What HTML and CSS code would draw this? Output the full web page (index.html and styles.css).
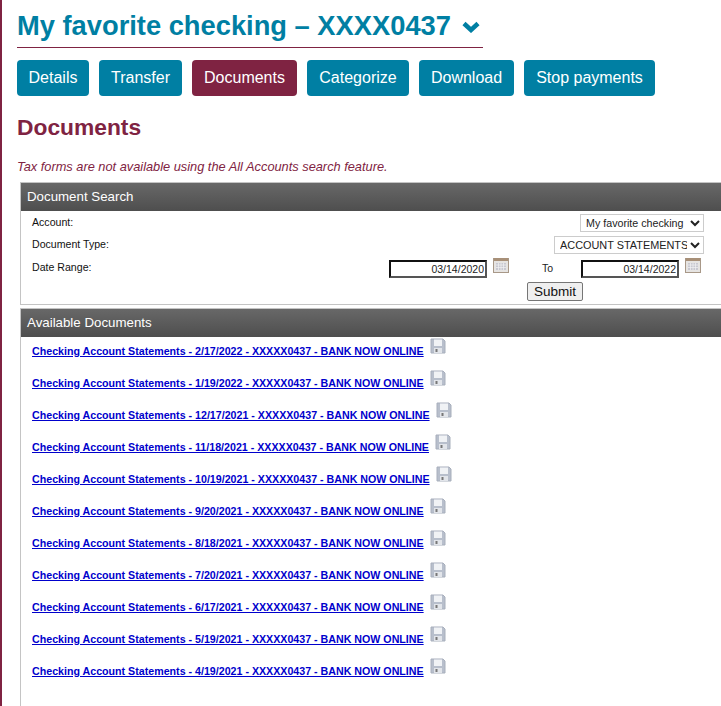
FILE: index.html
```html
<!DOCTYPE html>
<html lang="en">
<head>
<meta charset="utf-8">
<title>Documents</title>
<link rel="stylesheet" href="styles.css">
</head>
<body>
<svg class="defs" width="0" height="0" aria-hidden="true">
  <symbol id="disk" viewBox="0 0 16 16">
    <path d="M1 1h12l2 2v12H1z" fill="#b8bfcc" stroke="#a8afbc" stroke-width="1"/>
    <rect x="4" y="1.500" width="8" height="6.500" fill="#f0f2f5"/>
    <rect x="4" y="10" width="8" height="5" fill="#e2e5ea"/>
    <rect x="5.500" y="11" width="2" height="3" fill="#777"/>
  </symbol>
  <symbol id="cal" viewBox="0 0 16 16">
    <rect x="0.5" y="1.5" width="15" height="14" fill="#e6e4e2" stroke="#a89888"/>
    <rect x="1" y="1" width="14" height="3" fill="#a89078"/>
    <rect x="3" y="6" width="10" height="7" fill="#c8c8d0"/>
    <path d="M3 8h10M3 10.500h10M5.500 6v7M8 6v7M10.500 6v7" stroke="#f2f2f4" stroke-width="0.700"/>
  </symbol>
</svg>
<main class="page">
  <h1 class="title"><span>My favorite checking – XXXX0437</span>
    <svg class="chev" viewBox="0 0 18 12" width="18" height="12" aria-hidden="true"><path d="M2 2.500 9 9l7-6.500" fill="none" stroke="#007fa3" stroke-width="4.500"/></svg>
  </h1>
  <nav class="tabs">
    <a class="tab">Details</a>
    <a class="tab">Transfer</a>
    <a class="tab tab-on">Documents</a>
    <a class="tab">Categorize</a>
    <a class="tab">Download</a>
    <a class="tab">Stop payments</a>
  </nav>
  <h2 class="heading">Documents</h2>
  <p class="note">Tax forms are not available using the All Accounts search feature.</p>

  <section class="panel panel-search">
    <h3 class="panel-head">Document Search</h3>
    <div class="form">
      <div class="row row-a">
        <label class="lbl">Account:</label>
        <select class="sel sel-a"><option>My favorite checking</option></select>
      </div>
      <div class="row row-b">
        <label class="lbl">Document Type:</label>
        <select class="sel sel-b"><option>ACCOUNT STATEMENTS</option></select>
      </div>
      <div class="row row-c">
        <label class="lbl lbl-date">Date Range:</label>
        <div class="dates">
          <input class="date" value="03/14/2020">
          <svg class="cal" aria-hidden="true"><use href="#cal"/></svg>
          <span class="to">To</span>
          <input class="date" value="03/14/2022">
          <svg class="cal" aria-hidden="true"><use href="#cal"/></svg>
        </div>
      </div>
      <div class="submit-row"><button class="submit">Submit</button></div>
    </div>
  </section>

  <section class="panel panel-docs">
    <h3 class="panel-head">Available Documents</h3>
    <ul class="docs">
      <li class="doc"><a class="link">Checking Account Statements - 2/17/2022 - XXXXX0437 - BANK NOW ONLINE</a><svg class="disk" aria-hidden="true"><use href="#disk"/></svg></li>
      <li class="doc"><a class="link">Checking Account Statements - 1/19/2022 - XXXXX0437 - BANK NOW ONLINE</a><svg class="disk" aria-hidden="true"><use href="#disk"/></svg></li>
      <li class="doc"><a class="link">Checking Account Statements - 12/17/2021 - XXXXX0437 - BANK NOW ONLINE</a><svg class="disk" aria-hidden="true"><use href="#disk"/></svg></li>
      <li class="doc"><a class="link">Checking Account Statements - 11/18/2021 - XXXXX0437 - BANK NOW ONLINE</a><svg class="disk" aria-hidden="true"><use href="#disk"/></svg></li>
      <li class="doc"><a class="link">Checking Account Statements - 10/19/2021 - XXXXX0437 - BANK NOW ONLINE</a><svg class="disk" aria-hidden="true"><use href="#disk"/></svg></li>
      <li class="doc"><a class="link">Checking Account Statements - 9/20/2021 - XXXXX0437 - BANK NOW ONLINE</a><svg class="disk" aria-hidden="true"><use href="#disk"/></svg></li>
      <li class="doc"><a class="link">Checking Account Statements - 8/18/2021 - XXXXX0437 - BANK NOW ONLINE</a><svg class="disk" aria-hidden="true"><use href="#disk"/></svg></li>
      <li class="doc"><a class="link">Checking Account Statements - 7/20/2021 - XXXXX0437 - BANK NOW ONLINE</a><svg class="disk" aria-hidden="true"><use href="#disk"/></svg></li>
      <li class="doc"><a class="link">Checking Account Statements - 6/17/2021 - XXXXX0437 - BANK NOW ONLINE</a><svg class="disk" aria-hidden="true"><use href="#disk"/></svg></li>
      <li class="doc"><a class="link">Checking Account Statements - 5/19/2021 - XXXXX0437 - BANK NOW ONLINE</a><svg class="disk" aria-hidden="true"><use href="#disk"/></svg></li>
      <li class="doc"><a class="link">Checking Account Statements - 4/19/2021 - XXXXX0437 - BANK NOW ONLINE</a><svg class="disk" aria-hidden="true"><use href="#disk"/></svg></li>
    </ul>
  </section>
</main>
</body>
</html>
```
FILE: styles.css
```css
* { box-sizing: border-box; }
html, body { margin: 0; height: 706px; overflow: hidden; background: #fff; }
body { font-family: "Liberation Sans", Arial, sans-serif; border-left: 2px solid #7f2342; }
.defs { position: absolute; }
.page { width: 740px; height: 706px; overflow: hidden; padding: 0 0 0 15px; }

.title {
  display: flex; align-items: center; gap: 11px;
  width: 466px; height: 48px; margin: 0; padding-top: 4px;
  border-bottom: 1px solid #7f2342;
  color: #007fa3; font-size: 27.300px; font-weight: 700; line-height: 44px;
}
.chev { margin-top: 3px; }

.tabs {
  display: grid; grid-template-columns: 72px 83px 105px 102px 95px 131px; gap: 10px;
  margin-top: 12px;
}
.tab {
  height: 36px; border-radius: 4px; text-align: center;
  background: #007fa3; color: #fff; font-size: 16px; line-height: 35px;
}
.tab-on { background: #7f2342; }

.heading { margin: 17px 0 0; height: 28px; color: #7f2342; font-size: 22.800px; font-weight: 700; line-height: 29px; }
.note { margin: 18px 0 0; height: 16px; color: #7f2342; font-size: 12.800px; font-style: italic; line-height: 16px; }

.panel { margin-left: 3px; width: 720px; border: 1px solid #c4c4c4; }
.panel-search { margin-top: 7px; height: 123px; }
.panel-docs { margin-top: 3px; height: 500px; }
.panel-head {
  height: 28px; margin: 0; padding-left: 6px;
  background: linear-gradient(#686868, #4e4e4e);
  color: #fff; font-size: 13.300px; font-weight: 400; line-height: 27px;
}

.form { padding: 3px 35px 0 11px; }
.row { display: flex; justify-content: space-between; }
.row-a { height: 22px; }
.row-b { height: 24px; }
.row-c { height: 22px; }
.lbl { color: #111; font-size: 10.600px; line-height: 16px; }
.lbl-date { line-height: 14px; }
.sel {
  height: 18px; padding: 0 0 0 1px; background: #fff;
  border: 1px solid #ccc; border-radius: 0;
  color: #222; font-family: inherit; font-size: 10.700px;
}
.sel-a { width: 124px; }
.sel-b { width: 150px; font-size: 10.900px; }

.dates { display: flex; align-items: flex-start; margin-right: 3px; }
.date {
  width: 98px; height: 18px; padding: 0 1px;
  border-style: solid; border-width: 2px; border-color: #111 #555 #555 #111;
  color: #222; font-family: inherit; font-size: 10.500px; text-align: right;
}
.cal { width: 16px; height: 16px; margin: -3px 0 0 6px; }
.to { width: 72px; padding-left: 33px; color: #222; font-size: 10.500px; line-height: 16px; }

.submit-row { display: flex; justify-content: flex-end; padding-right: 121px; }
.submit {
  width: 56px; height: 19px; padding: 0;
  background: #efefef; border: 1px solid #767676; border-radius: 2px;
  color: #111; font-family: inherit; font-size: 13.500px; line-height: 16px;
}

.docs { list-style: none; margin: 0; padding: 0 0 0 11px; }
.doc { display: flex; align-items: flex-start; height: 32px; padding-top: 1px; }
.link { margin-top: 7px; color: #0000cc; font-size: 10.660px; font-weight: 700; text-decoration: underline; line-height: 13px; }
.disk { width: 16px; height: 16px; margin-left: 6px; }
```
